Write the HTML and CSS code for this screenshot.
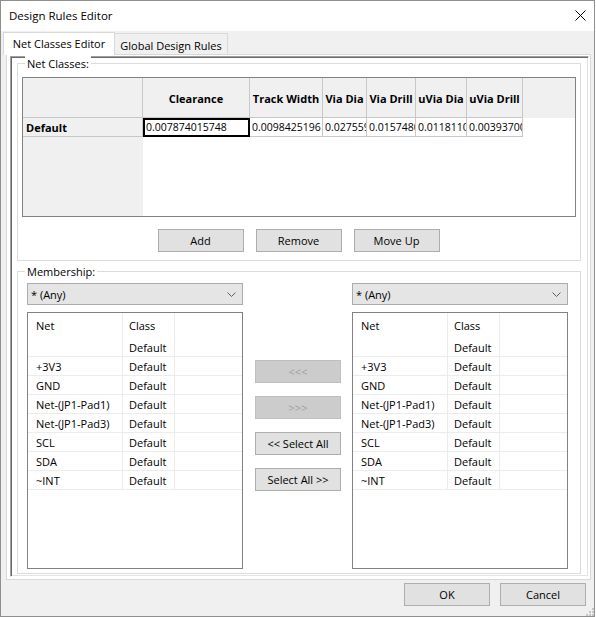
FILE: index.html
```html
<!DOCTYPE html>
<html>
<head>
<meta charset="utf-8">
<title>Design Rules Editor</title>
<link rel="stylesheet" href="styles.css">
</head>
<body>
<div class="window">
  <div class="titlebar">
    <span class="title">Design Rules Editor</span>
    <svg class="close" width="11" height="11" viewBox="0 0 11 11"><path d="M0.5 0.5L10.5 10.5M10.5 0.5L0.5 10.5" stroke="#000" stroke-width="1" fill="none"/></svg>
  </div>
  <div class="client">
    <div class="tabs">
      <div class="tab active">Net Classes Editor</div>
      <div class="tab">Global Design Rules</div>
    </div>
    <div class="tabpage">
      <div class="panel3d">
        <div class="group group-net">
          <span class="legend">Net Classes:</span>
          <div class="dgv">
            <div class="hc corner"></div>
            <div class="hc">Clearance</div>
            <div class="hc">Track Width</div>
            <div class="hc">Via Dia</div>
            <div class="hc">Via Drill</div>
            <div class="hc">uVia Dia</div>
            <div class="hc">uVia Drill</div>
            <div class="hc-fill"></div>
            <div class="rh">Default</div>
            <div class="cell sel">0.007874015748</div>
            <div class="cell">0.0098425196</div>
            <div class="cell">0.0275590551</div>
            <div class="cell">0.0157480315</div>
            <div class="cell">0.0118110236</div>
            <div class="cell">0.0039370078</div>
            <div class="cell-fill"></div>
            <div class="rh-fill"></div>
            <div class="body-fill"></div>
          </div>
          <div class="btnrow">
            <button class="btn">Add</button>
            <button class="btn">Remove</button>
            <button class="btn">Move Up</button>
          </div>
        </div>
        <div class="group group-member">
          <span class="legend">Membership:</span>
          <div class="member">
            <div class="side">
              <div class="combo"><span>* (Any)</span><svg class="chev" width="9" height="5" viewBox="0 0 9 5"><path d="M0.5 0.5L4.5 4.5L8.5 0.5" stroke="#606060" fill="none" stroke-width="1"/></svg></div>
              <div class="list">
                <div class="lrow lhead"><span class="c1">Net</span><span class="c2">Class</span><span class="c3"></span></div>
                <div class="lrow"><span class="c1"></span><span class="c2">Default</span><span class="c3"></span></div>
                <div class="lrow"><span class="c1">+3V3</span><span class="c2">Default</span><span class="c3"></span></div>
                <div class="lrow"><span class="c1">GND</span><span class="c2">Default</span><span class="c3"></span></div>
                <div class="lrow"><span class="c1">Net-(JP1-Pad1)</span><span class="c2">Default</span><span class="c3"></span></div>
                <div class="lrow"><span class="c1">Net-(JP1-Pad3)</span><span class="c2">Default</span><span class="c3"></span></div>
                <div class="lrow"><span class="c1">SCL</span><span class="c2">Default</span><span class="c3"></span></div>
                <div class="lrow"><span class="c1">SDA</span><span class="c2">Default</span><span class="c3"></span></div>
                <div class="lrow"><span class="c1">~INT</span><span class="c2">Default</span><span class="c3"></span></div>
              </div>
            </div>
            <div class="mid">
              <button class="btn disabled">&lt;&lt;&lt;</button>
              <button class="btn disabled">&gt;&gt;&gt;</button>
              <button class="btn">&lt;&lt; Select All</button>
              <button class="btn">Select All &gt;&gt;</button>
            </div>
            <div class="side">
              <div class="combo"><span>* (Any)</span><svg class="chev" width="9" height="5" viewBox="0 0 9 5"><path d="M0.5 0.5L4.5 4.5L8.5 0.5" stroke="#606060" fill="none" stroke-width="1"/></svg></div>
              <div class="list">
                <div class="lrow lhead"><span class="c1">Net</span><span class="c2">Class</span><span class="c3"></span></div>
                <div class="lrow"><span class="c1"></span><span class="c2">Default</span><span class="c3"></span></div>
                <div class="lrow"><span class="c1">+3V3</span><span class="c2">Default</span><span class="c3"></span></div>
                <div class="lrow"><span class="c1">GND</span><span class="c2">Default</span><span class="c3"></span></div>
                <div class="lrow"><span class="c1">Net-(JP1-Pad1)</span><span class="c2">Default</span><span class="c3"></span></div>
                <div class="lrow"><span class="c1">Net-(JP1-Pad3)</span><span class="c2">Default</span><span class="c3"></span></div>
                <div class="lrow"><span class="c1">SCL</span><span class="c2">Default</span><span class="c3"></span></div>
                <div class="lrow"><span class="c1">SDA</span><span class="c2">Default</span><span class="c3"></span></div>
                <div class="lrow"><span class="c1">~INT</span><span class="c2">Default</span><span class="c3"></span></div>
              </div>
            </div>
          </div>
        </div>
      </div>
    </div>
    <div class="footer">
      <button class="btn">OK</button>
      <button class="btn">Cancel</button>
      <svg class="grip" width="9" height="9" viewBox="0 0 9 9">
        <rect x="7" y="1" width="2" height="2" fill="#c4c4c4"/>
        <rect x="4" y="4" width="2" height="2" fill="#c4c4c4"/>
        <rect x="7" y="4" width="2" height="2" fill="#c4c4c4"/>
        <rect x="1" y="7" width="2" height="2" fill="#c4c4c4"/>
        <rect x="4" y="7" width="2" height="2" fill="#c4c4c4"/>
        <rect x="7" y="7" width="2" height="2" fill="#c4c4c4"/>
      </svg>
    </div>
  </div>
</div>
</body>
</html>
```
FILE: styles.css
```css
* { box-sizing: border-box; }
html, body { margin: 0; padding: 0; background: #fff; }
body {
  font-family: "Open Sans", "Noto Sans", sans-serif;
  font-size: 11px;
  color: #000;
}
.window {
  width: 595px;
  height: 617px;
  border: 1px solid #8f8f8f;
  display: flex;
  flex-direction: column;
  background: #f0f0f0;
}
.titlebar {
  height: 30px;
  flex: none;
  background: #fff;
  display: flex;
  align-items: center;
  padding: 0 8px 2px 8px;
}
.title { font-size: 11.5px; }
.close { margin-left: auto; display: block; }
.client {
  flex: 1;
  display: flex;
  flex-direction: column;
  background: #f0f0f0;
}
.tabs {
  display: flex;
  align-items: flex-end;
  height: 23px;
  margin: 1px 0 0 2px;
}
.tab {
  display: flex;
  align-items: center;
  justify-content: center;
  border: 1px solid #d9d9d9;
  border-bottom: none;
}
.tab.active {
  position: relative;
  z-index: 1;
  width: 112px;
  height: 23px;
  background: #fff;
  padding-bottom: 2px;
}
.tab:not(.active) {
  width: 113px;
  height: 22px;
  border-left: none;
  background: #f0f0f0;
  padding-top: 1px;
}
.tabpage {
  margin: -1px 0 0 5px;
  width: 585px;
  height: 526px;
  border: 1px solid #d9d9d9;
  background: #fff;
  padding: 1px 0 0 3px;
}
.panel3d {
  width: 579px;
  height: 521px;
  border: 1px solid;
  border-color: #a0a0a0 #fff #fff #a0a0a0;
  box-shadow: inset 1px 1px 0 #696969, inset -1px -1px 0 #e3e3e3;
  padding: 1px;
  background: #fff;
}
.group {
  margin-left: 5px;
  width: 564px;
  border: 1px solid #dcdcdc;
  line-height: 15px;
}
.group-net { margin-top: 5px; height: 198px; }
.group-member { margin-top: 10px; height: 303px; }
.legend {
  display: block;
  width: max-content;
  margin: -8px 0 0 7px;
  padding: 0 2px;
  height: 15px;
  background: #fff;
}

/* DataGridView */
.dgv {
  margin: 6px 4px 0 4px;
  height: 140px;
  border: 1px solid #828282;
  background: #fff;
  display: grid;
  grid-template-columns: 120px 107px 73px 44px 49px 51px 56px 1fr;
  grid-template-rows: 40px 19px 1fr;
}
.hc {
  background: #f0f0f0;
  border-right: 1px solid #c8c8c8;
  border-bottom: 1px solid #c8c8c8;
  font-weight: bold;
  display: flex;
  align-items: center;
  justify-content: center;
  white-space: nowrap;
  overflow: hidden;
  padding-top: 1px;
}
.hc-fill { background: #f0f0f0; }
.rh {
  background: #f0f0f0;
  border-right: 1px solid #c8c8c8;
  border-bottom: 1px solid #c8c8c8;
  font-weight: bold;
  display: flex;
  align-items: center;
  padding-left: 3px;
}
.cell {
  border-right: 1px solid #c8c8c8;
  border-bottom: 1px solid #c8c8c8;
  display: flex;
  align-items: center;
  padding-left: 2px;
  white-space: nowrap;
  overflow: hidden;
  font-size: 10.5px;
}
.cell.sel {
  border: 2px solid #000;
  padding-left: 1px;
}
.cell-fill { background: #fff; }
.rh-fill { background: #f0f0f0; }
.body-fill { grid-column: 2 / -1; background: #fff; }

.btnrow {
  display: flex;
  justify-content: center;
  gap: 12px;
  margin-top: 12px;
  padding-right: 1px;
}
.btn {
  width: 86px;
  height: 23px;
  border: 1px solid #adadad;
  background: #e1e1e1;
  font: inherit;
  color: #000;
  padding: 0;
  margin: 0;
  line-height: 20px;
  text-align: center;
  flex: none;
}
.btn.disabled {
  background: #cccccc;
  border-color: #bfbfbf;
  color: #a0a0a0;
}

/* Membership */
.member {
  display: flex;
  margin: 4px 0 0 9px;
}
.side {
  width: 216px;
  display: flex;
  flex-direction: column;
  gap: 7px;
}
.mid {
  width: 86px;
  margin: 0 11px 0 12px;
  padding-top: 77px;
  display: flex;
  flex-direction: column;
  gap: 13px;
}
.combo {
  height: 22px;
  border: 1px solid #acacac;
  background: #e5e5e5;
  display: flex;
  align-items: center;
  padding: 0 6px 0 3px;
}
.chev { margin-left: auto; display: block; }
.list {
  height: 257px;
  border: 1px solid #828282;
  background: #fff;
}
.lrow {
  display: grid;
  grid-template-columns: 95px 52px 1fr;
  height: 19px;
  border-bottom: 1px solid #ececec;
}
.lrow.lhead {
  height: 25px;
  border-bottom: none;
}
.lrow span {
  display: flex;
  align-items: center;
  white-space: nowrap;
  overflow: hidden;
}
.c1 { border-right: 1px solid #ececec; padding-left: 8px; }
.c2 { border-right: 1px solid #ececec; padding-left: 6px; }

/* Footer */
.footer {
  flex: 1;
  position: relative;
  display: flex;
  justify-content: flex-end;
  align-items: flex-start;
  gap: 10px;
  padding: 3px 8px 0 0;
}
.grip {
  position: absolute;
  right: 0;
  bottom: 0;
  display: block;
}
```
